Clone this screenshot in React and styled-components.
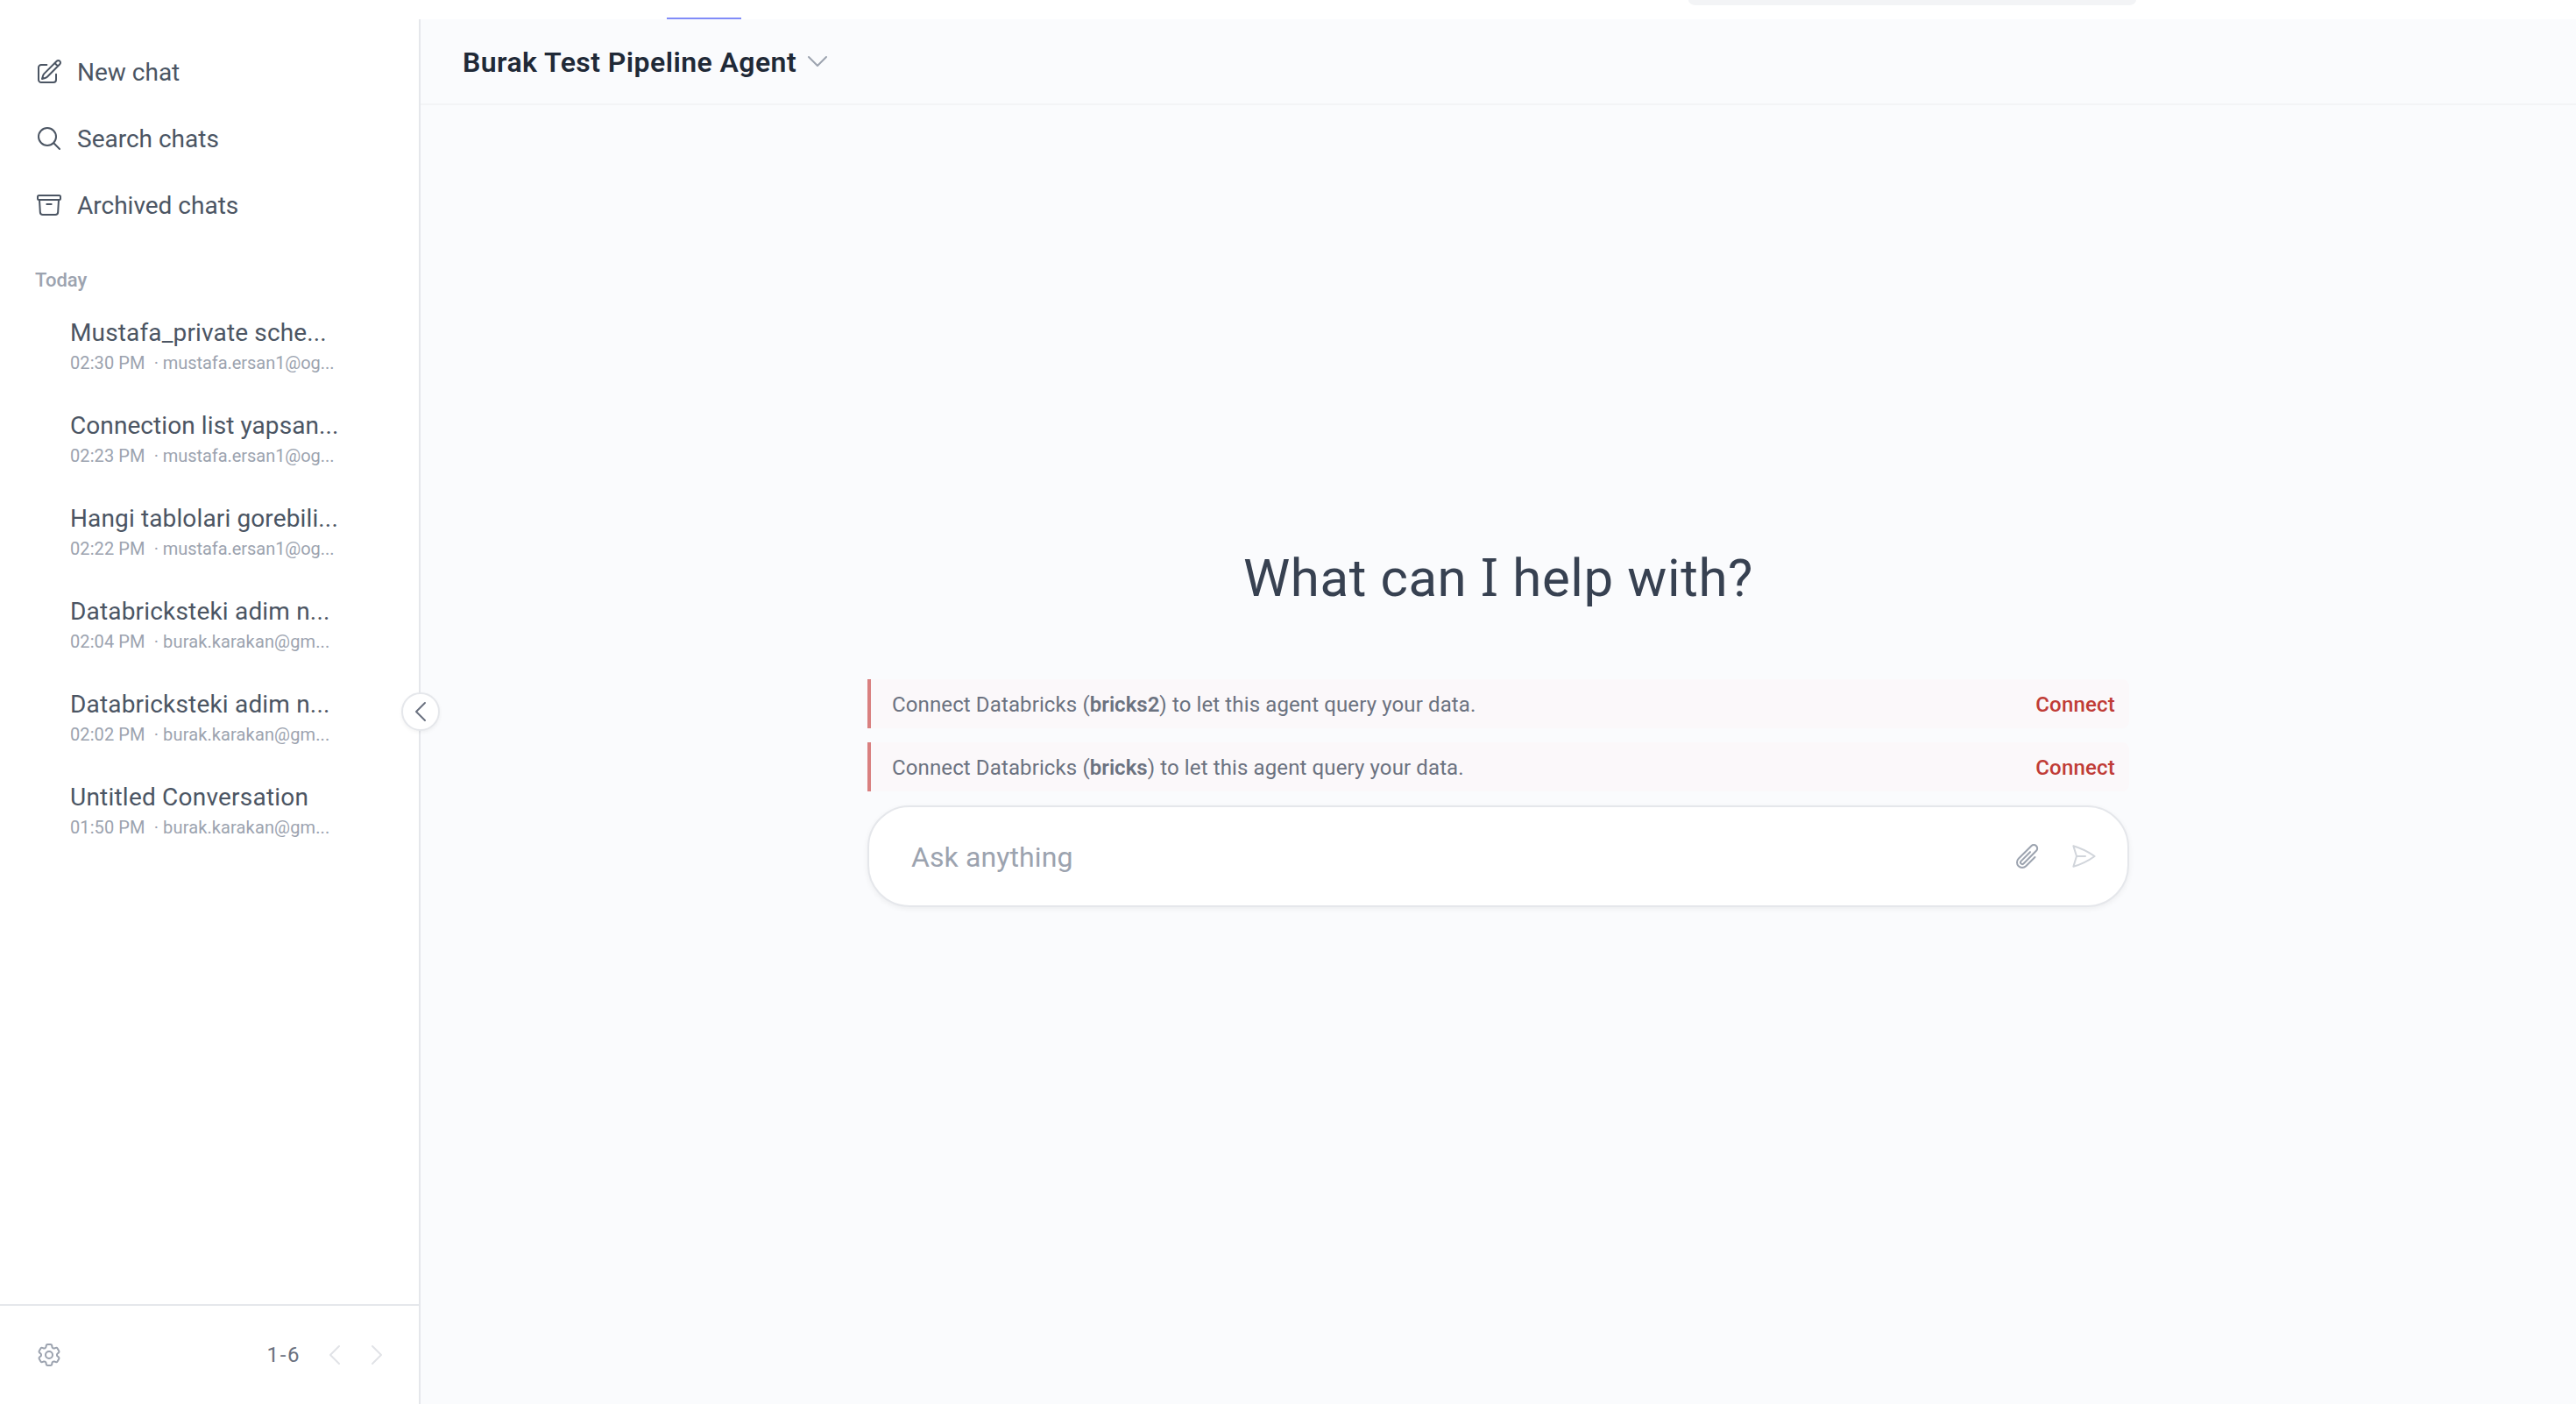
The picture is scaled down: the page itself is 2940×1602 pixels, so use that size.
import React from "react";
import styled, { createGlobalStyle } from "styled-components";
import {
  HiOutlinePencilSquare,
  HiOutlineMagnifyingGlass,
  HiOutlineArchiveBox,
  HiOutlineCog6Tooth,
  HiOutlineChevronLeft,
  HiOutlineChevronRight,
  HiOutlineChevronDown,
  HiOutlinePaperClip,
  HiOutlinePaperAirplane,
} from "react-icons/hi2";

const GlobalStyle = createGlobalStyle`
  *, *::before, *::after { box-sizing: border-box; }
  body {
    margin: 0;
    background: #fff;
    font-family: Roboto, "Liberation Sans", sans-serif;
    -webkit-font-smoothing: antialiased;
  }
  button { font: inherit; border: 0; background: none; padding: 0; }
  svg { display: block; flex: none; }
`;

const Page = styled.div`
  display: flex;
  flex-direction: column;
  height: 1602px;
  overflow: hidden;
`;

const TopBar = styled.header`
  display: flex;
  justify-content: space-between;
  flex: none;
  height: 22px;
  padding: 0 502px 0 761px;
  background: #fff;
`;

const ActiveTab = styled.div`
  align-self: flex-end;
  width: 85px;
  height: 2px;
  background: #818cf8;
`;

const TopSearch = styled.div`
  width: 511px;
  height: 6px;
  border-radius: 0 0 8px 8px / 0 0 6px 6px;
  background: #f3f4f6;
`;

const Body = styled.div`
  display: flex;
  flex: 1;
  min-height: 0;
`;

const Sidebar = styled.aside`
  position: relative;
  display: flex;
  flex-direction: column;
  flex: none;
  width: 480px;
  border-right: 2px solid #e5e7eb;
  background: #fff;
`;

const Nav = styled.nav`
  display: flex;
  flex-direction: column;
  padding-top: 22px;
`;

const NavItem = styled.button`
  display: flex;
  align-items: center;
  gap: 16px;
  height: 76px;
  padding-left: 40px;
  font-size: 28px;
  color: #4b5563;
`;

const GroupLabel = styled.h2`
  margin: 28px 0 20px 40px;
  font-size: 22px;
  line-height: 40px;
  font-weight: 500;
  color: #9ca3af;
`;

const ChatList = styled.ul`
  display: flex;
  flex: 1;
  flex-direction: column;
  gap: 38px;
  margin: 0;
  padding: 0 92px 0 80px;
  list-style: none;
`;

const ChatTitle = styled.div`
  font-size: 28px;
  line-height: 40px;
  white-space: nowrap;
  letter-spacing: ${(p) => p.$track || 0}px;
  color: #4b5563;
`;

const ChatMeta = styled.div`
  display: flex;
  gap: 10px;
  font-size: 20px;
  line-height: 28px;
  letter-spacing: 0.1px;
  white-space: nowrap;
  color: #9ca3af;
`;

const Author = styled.span`
  letter-spacing: ${(p) => p.$track || 0}px;
`;

const SidebarFooter = styled.footer`
  display: flex;
  align-items: center;
  height: 114px;
  padding: 0 32px 0 40px;
  border-top: 2px solid #e5e7eb;
  color: #9ca3af;
`;

const PageRange = styled.span`
  margin: 0 23px 0 auto;
  font-size: 24px;
  letter-spacing: 1.6px;
  color: #6b7280;
`;

const Pager = styled.div`
  display: flex;
  gap: 16px;
  color: #e1e3e7;
`;

const CollapseButton = styled.button`
  position: absolute;
  top: 768px;
  right: -24px;
  display: flex;
  align-items: center;
  justify-content: center;
  width: 44px;
  height: 44px;
  border: 2px solid #e5e7eb;
  border-radius: 50%;
  background: #fff;
  box-shadow: 0 2px 4px rgba(0, 0, 0, 0.05);
  color: #6b7280;
`;

const Main = styled.main`
  display: flex;
  flex: 1;
  flex-direction: column;
  background: #fafbfd;
`;

const AgentHeader = styled.div`
  display: flex;
  align-items: center;
  gap: 8px;
  height: 98px;
  padding-left: 48px;
  border-bottom: 2px solid #f3f4f6;
  color: #9ca3af;
`;

const AgentName = styled.h1`
  margin: 0;
  padding-top: 1px;
  font-size: 32px;
  line-height: 40px;
  font-weight: 600;
  letter-spacing: 0.44px;
  color: #1f2937;
`;

const Center = styled.section`
  display: flex;
  flex-direction: column;
  align-self: center;
  width: 1440px;
  padding-top: 504px;
`;

const Heading = styled.h2`
  margin: 0 0 79px;
  font-size: 60px;
  line-height: 72px;
  font-weight: 400;
  letter-spacing: 0.6px;
  text-align: center;
  color: #374151;
`;

const SerifedI = styled.span`
  font-family: "Noto Sans", Roboto, sans-serif;
  line-height: 1;
`;

const Notices = styled.div`
  display: flex;
  flex-direction: column;
  gap: 16px;
  margin-bottom: 16px;
`;

const Notice = styled.div`
  display: flex;
  align-items: center;
  justify-content: space-between;
  height: 56px;
  padding: 1px 16px 0 24px;
  border-left: 4px solid #d98080;
  border-radius: 0 8px 8px 0;
  background: #fbf8fa;
  font-size: 24px;
  letter-spacing: 0.12px;
  color: #6b7280;

  strong { font-weight: 600; letter-spacing: 0; }
`;

const ConnectButton = styled.button`
  font-weight: 500;
  letter-spacing: 0.2px;
  color: #c03c36;
`;

const Composer = styled.div`
  display: flex;
  align-items: center;
  height: 116px;
  padding: 0 34px 0 48px;
  border: 2px solid #e5e7eb;
  border-radius: 48px;
  background: #fff;
  box-shadow: 0 2px 6px rgba(0, 0, 0, 0.06);
`;

const Placeholder = styled.span`
  flex: 1;
  padding-top: 1px;
  font-size: 32px;
  letter-spacing: 0.1px;
  color: #9ca3af;
`;

const ComposerAction = styled.button`
  display: flex;
  margin-left: ${(p) => p.$gap || 0}px;
  color: ${(p) => (p.$muted ? "#d1d5db" : "#9ca3af")};
`;

const mustafa = { author: "mustafa.ersan1@og...", authorTrack: -0.05 };
const burak = { author: "burak.karakan@gm...", authorTrack: 0.13 };

const chats = [
  { title: "Mustafa_private sche...", track: 0.15, time: "02:30 PM", ...mustafa },
  { title: "Connection list yapsan...", track: 0.08, time: "02:23 PM", ...mustafa },
  { title: "Hangi tablolari gorebili...", track: 0.13, time: "02:22 PM", ...mustafa },
  { title: "Databricksteki adim n...", track: 0.18, time: "02:04 PM", ...burak },
  { title: "Databricksteki adim n...", track: 0.18, time: "02:02 PM", ...burak },
  { title: "Untitled Conversation", track: 0.22, time: "01:50 PM", ...burak },
];

const connections = ["bricks2", "bricks"];

const icon = { size: 32, strokeWidth: 1.5 };

export default function App() {
  return (
    <Page>
      <GlobalStyle />
      <TopBar>
        <ActiveTab />
        <TopSearch />
      </TopBar>
      <Body>
        <Sidebar>
          <Nav>
            <NavItem><HiOutlinePencilSquare {...icon} />New chat</NavItem>
            <NavItem><HiOutlineMagnifyingGlass {...icon} />Search chats</NavItem>
            <NavItem><HiOutlineArchiveBox {...icon} />Archived chats</NavItem>
          </Nav>
          <GroupLabel>Today</GroupLabel>
          <ChatList>
            {chats.map((chat) => (
              <li key={chat.time}>
                <ChatTitle $track={chat.track}>{chat.title}</ChatTitle>
                <ChatMeta>
                  <span>{chat.time}</span>
                  <Author $track={chat.authorTrack}>· {chat.author}</Author>
                </ChatMeta>
              </li>
            ))}
          </ChatList>
          <SidebarFooter>
            <HiOutlineCog6Tooth {...icon} />
            <PageRange>1-6</PageRange>
            <Pager>
              <HiOutlineChevronLeft {...icon} />
              <HiOutlineChevronRight {...icon} />
            </Pager>
          </SidebarFooter>
          <CollapseButton aria-label="Collapse sidebar">
            <HiOutlineChevronLeft {...icon} />
          </CollapseButton>
        </Sidebar>
        <Main>
          <AgentHeader>
            <AgentName>Burak Test Pipeline Agent</AgentName>
            <HiOutlineChevronDown {...icon} />
          </AgentHeader>
          <Center>
            <Heading>What can <SerifedI>I</SerifedI> help with?</Heading>
            <Notices>
              {connections.map((name) => (
                <Notice key={name}>
                  <span>
                    Connect Databricks (<strong>{name}</strong>) to let this agent query your data.
                  </span>
                  <ConnectButton>Connect</ConnectButton>
                </Notice>
              ))}
            </Notices>
            <Composer>
              <Placeholder>Ask anything</Placeholder>
              <ComposerAction aria-label="Attach file">
                <HiOutlinePaperClip {...icon} />
              </ComposerAction>
              <ComposerAction $gap={32} $muted aria-label="Send">
                <HiOutlinePaperAirplane {...icon} />
              </ComposerAction>
            </Composer>
          </Center>
        </Main>
      </Body>
    </Page>
  );
}
